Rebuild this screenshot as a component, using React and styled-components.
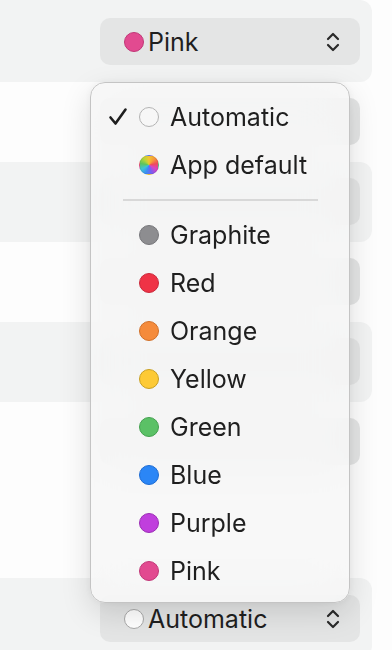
import React from "react";
import styled, { createGlobalStyle } from "styled-components";

const Global = createGlobalStyle`
  html, body { margin: 0; padding: 0; background: #ffffff; }
  body { font-family: Inter, "Noto Sans", sans-serif; color: #1f1f1f; }
`;

const Page = styled.div`
  position: relative;
  width: 392px;
  height: 650px;
  overflow: hidden;
  background: #fdfdfd;
`;

const List = styled.div`
  display: flex;
  flex-direction: column;
  width: 372px;
`;

const Row = styled.div`
  display: flex;
  justify-content: flex-end;
  align-items: flex-start;
  box-sizing: border-box;
  height: ${(p) => p.h}px;
  padding: ${(p) => p.pad}px 12px 0 0;
  background: ${(p) => (p.shaded ? "#f2f3f3" : "transparent")};
  border-radius: 0 12px 12px 0;
`;

const Select = styled.div`
  display: flex;
  align-items: center;
  box-sizing: border-box;
  width: 260px;
  height: 47px;
  padding: 0 19px 0 24px;
  background: #e4e5e5;
  border-radius: 10px;
  font-size: 25px;
  color: #1f1f1f;
`;

const Label = styled.span`
  flex: 1;
  margin-left: 4px;
`;

const Dot = styled.span`
  display: inline-block;
  box-sizing: border-box;
  width: 20px;
  height: 20px;
  border-radius: 50%;
  flex-shrink: 0;
  background: ${(p) => p.fill};
  border: 1.5px solid ${(p) => p.edge};
`;

const Menu = styled.div`
  position: absolute;
  left: 90px;
  top: 82px;
  width: 260px;
  height: 521px;
  box-sizing: border-box;
  padding: 10px 0 8px;
  border: 1px solid #c4c4c4;
  border-radius: 15px;
  background: rgba(246, 247, 247, 0.82);
  backdrop-filter: blur(24px);
  box-shadow: 0 10px 30px rgba(0, 0, 0, 0.13), 0 0 8px rgba(0, 0, 0, 0.05);
`;

const Item = styled.div`
  display: grid;
  grid-template-columns: 20px 20px 1fr;
  column-gap: 11px;
  align-items: center;
  height: 48px;
  padding-left: 17px;
  font-size: 25px;
  color: #1f1f1f;
`;

const Separator = styled.div`
  height: 22px;
  display: flex;
  align-items: center;
  padding: 0 31px 0 32px;
  &::after {
    content: "";
    flex: 1;
    height: 2px;
    background: #d8d8d8;
  }
`;

const Check = () => (
  <svg width="20" height="20" viewBox="0 0 20 20">
    <path d="M2.5 10.5 L7.5 16.5 L17.5 2.5" fill="none" stroke="#1e1e1e" strokeWidth="2.6" strokeLinecap="round" strokeLinejoin="round" />
  </svg>
);

const UpDown = () => (
  <svg width="16" height="22" viewBox="0 0 16 22">
    <path d="M3 8 L8 3 L13 8 M3 14 L8 19 L13 14" fill="none" stroke="#2a2a2a" strokeWidth="2.2" strokeLinecap="round" strokeLinejoin="round" />
  </svg>
);

const rainbow = "conic-gradient(from 0deg, #f4c530, #f59a3a, #ef4a5b, #d744c5, #7c5cf0, #3c8cf5, #3fc3d6, #5cc45f, #b8d43a, #f4c530)";

const colors = [
  ["Graphite", "#8d8d90", "#76767a"],
  ["Red", "#ef3346", "#c9283a"],
  ["Orange", "#f58b3b", "#cf6f28"],
  ["Yellow", "#fdca36", "#c79f22"],
  ["Green", "#5bc166", "#43a04e"],
  ["Blue", "#2b86f6", "#1d6bd2"],
  ["Purple", "#c03fdd", "#9a2db4"],
  ["Pink", "#e24a90", "#c13777"],
];

const rows = [
  { h: 82, pad: 18, shaded: true, top: true },
  { h: 80, pad: 16 },
  { h: 80, pad: 16, shaded: true },
  { h: 80, pad: 16 },
  { h: 80, pad: 16, shaded: true },
  { h: 176, pad: 16 },
  { h: 80, pad: 17, shaded: true, bottom: true },
];

export default function App() {
  return (
    <Page>
      <Global />
      <List>
        {rows.map((r, i) => (
          <Row key={i} h={r.h} pad={r.pad} shaded={r.shaded}>
            <Select>
              {r.top && (
                <>
                  <Dot fill="#e24a90" edge="#c13777" />
                  <Label>Pink</Label>
                  <UpDown />
                </>
              )}
              {r.bottom && (
                <>
                  <Dot fill="#ffffff" edge="#a9a9a9" />
                  <Label>Automatic</Label>
                  <UpDown />
                </>
              )}
            </Select>
          </Row>
        ))}
      </List>
      <Menu>
        <Item>
          <Check />
          <Dot fill="#f7f7f7" edge="#b3b3b3" />
          <span>Automatic</span>
        </Item>
        <Item>
          <span />
          <Dot fill={rainbow} edge="rgba(0,0,0,0.08)" />
          <span>App default</span>
        </Item>
        <Separator />
        {colors.map(([name, fill, edge]) => (
          <Item key={name}>
            <span />
            <Dot fill={fill} edge={edge} />
            <span>{name}</span>
          </Item>
        ))}
      </Menu>
    </Page>
  );
}
